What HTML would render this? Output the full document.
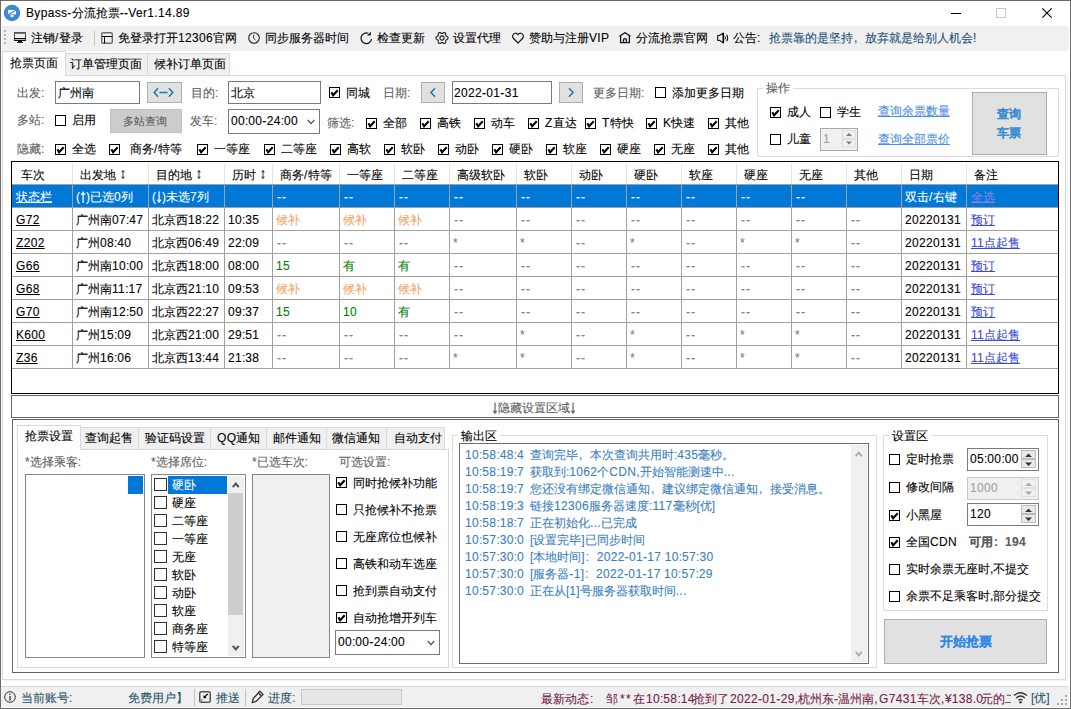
<!DOCTYPE html><html><head><meta charset="utf-8"><style>html,body{margin:0;padding:0;width:1071px;height:709px;overflow:hidden;background:#fff}body{position:relative;font-family:"Liberation Sans",sans-serif;font-size:12px}div{position:absolute;box-sizing:border-box}.t{font:12px/16px "Liberation Sans",sans-serif;white-space:nowrap;-webkit-text-stroke:0.1px currentColor}.l{letter-spacing:.33px}.fc{display:inline-block;width:12px;text-indent:1px}.ar{display:inline-block;transform:scale(1.25,1.55);transform-origin:50% 62%;-webkit-text-stroke:0.3px currentColor}</style></head><body><div style="left:0px;top:0px;width:1071px;height:709px;background:#fff"></div>
<svg style="left:3px;top:4px;position:absolute" width="18" height="18" viewBox="0 0 18 18"><circle cx="9" cy="9" r="8.2" fill="#3b88d8"/><path d="M5 6 H13 V10.4 L5 10.4 Z" fill="#fff"/><path d="M5.2 10.6 L12.8 6.2" stroke="#3b88d8" stroke-width="1.1"/><rect x="7.6" y="11" width="3" height="2" fill="#fff"/></svg>
<div class="t" style="left:26px;top:5px;color:#000;"><span class="l">Bypass-</span>分流抢票<span class="l">--Ver1.14.89</span></div>
<div style="left:951px;top:13px;width:10px;height:1px;background:#000"></div>
<div style="left:996px;top:8px;width:10px;height:10px;border:1px solid #c6c6c6;background:transparent;"></div>
<svg style="position:absolute;left:1042px;top:8px" width="10" height="10"><path d="M0.3 0.3 L9.7 9.7 M9.7 0.3 L0.3 9.7" stroke="#000" stroke-width="1.1"/></svg>
<div style="left:2px;top:26px;width:1067px;height:25px;background:#f0f0f0;border-top-right-radius:4px;border-bottom-right-radius:4px"></div>
<div style="left:4px;top:30px;width:2px;height:2px;background:#b4b4b4"></div>
<div style="left:4px;top:34px;width:2px;height:2px;background:#b4b4b4"></div>
<div style="left:4px;top:38px;width:2px;height:2px;background:#b4b4b4"></div>
<div style="left:4px;top:42px;width:2px;height:2px;background:#b4b4b4"></div>
<div style="left:94px;top:31px;width:1px;height:15px;background:#c4c4c4"></div>
<svg style="left:14px;top:32px;position:absolute" width="12" height="12" viewBox="0 0 12 12" shape-rendering="crispEdges"><rect x="0" y="0" width="12" height="1" fill="#555"/><rect x="0" y="0" width="1" height="9" fill="#444"/><rect x="11" y="0" width="1" height="9" fill="#444"/><rect x="0" y="1" width="12" height="1" fill="#777"/><rect x="0" y="6" width="12" height="1" fill="#111"/><rect x="1" y="7" width="10" height="1" fill="#bcbcc4"/><rect x="0" y="8" width="12" height="1" fill="#111"/><rect x="4" y="9" width="4" height="2" fill="#000"/><rect x="3" y="10" width="6" height="1" fill="#333"/></svg>
<div class="t" style="left:31px;top:30px;color:#000;">注销<span class="l">/</span>登录</div>
<svg style="left:101px;top:32px;position:absolute" width="12" height="12" viewBox="0 0 12 12"><rect x="0.7" y="0.7" width="10.6" height="10.6" rx="1.4" fill="none" stroke="#6c6c6c" stroke-width="1.4"/><rect x="1" y="4" width="10" height="1" fill="#000"/><rect x="3" y="4" width="1" height="7.3" fill="#000"/></svg>
<div class="t" style="left:118px;top:30px;color:#000;">免登录打开<span class="l">12306</span>官网</div>
<svg style="left:248px;top:32px;position:absolute" width="12" height="12" viewBox="0 0 12 12"><circle cx="6" cy="6" r="5.3" fill="none" stroke="#222" stroke-width="1.1"/><path d="M5.6 2.8 V6.3 L7.6 8" fill="none" stroke="#333" stroke-width="1"/></svg>
<div class="t" style="left:265px;top:30px;color:#000;">同步服务器时间</div>
<svg style="left:360px;top:32px;position:absolute" width="13" height="13" viewBox="0 0 13 13"><path d="M8.2 1.3 A5.3 5.3 0 1 0 11.6 7.2" fill="none" stroke="#111" stroke-width="1.2"/><path d="M7 3.4 L10.8 3.4 L10.8 -0.2 Z" fill="#111"/></svg>
<div class="t" style="left:377px;top:30px;color:#000;">检查更新</div>
<svg style="left:435px;top:31px;position:absolute" width="14" height="14" viewBox="0 0 14 14"><path d="M13.10 7.00 L12.97 7.52 L12.61 7.99 L12.12 8.37 L11.60 8.68 L11.18 8.95 L10.90 9.25 L10.77 9.64 L10.75 10.15 L10.75 10.75 L10.66 11.37 L10.44 11.91 L10.05 12.28 L9.53 12.43 L8.95 12.36 L8.37 12.12 L7.85 11.83 L7.40 11.59 L7.00 11.50 L6.60 11.59 L6.15 11.83 L5.63 12.12 L5.05 12.36 L4.47 12.43 L3.95 12.28 L3.56 11.91 L3.34 11.37 L3.25 10.75 L3.25 10.15 L3.23 9.64 L3.10 9.25 L2.82 8.95 L2.40 8.68 L1.88 8.37 L1.39 7.99 L1.03 7.52 L0.90 7.00 L1.03 6.48 L1.39 6.01 L1.88 5.63 L2.40 5.32 L2.82 5.05 L3.10 4.75 L3.23 4.36 L3.25 3.85 L3.25 3.25 L3.34 2.63 L3.56 2.09 L3.95 1.72 L4.47 1.57 L5.05 1.64 L5.63 1.88 L6.15 2.17 L6.60 2.41 L7.00 2.50 L7.40 2.41 L7.85 2.17 L8.37 1.88 L8.95 1.64 L9.53 1.57 L10.05 1.72 L10.44 2.09 L10.66 2.63 L10.75 3.25 L10.75 3.85 L10.77 4.36 L10.90 4.75 L11.18 5.05 L11.60 5.32 L12.12 5.63 L12.61 6.01 L12.97 6.48 Z" fill="none" stroke="#222" stroke-width="1.15"/><circle cx="7" cy="7" r="2.1" fill="none" stroke="#222" stroke-width="1.1"/></svg>
<div class="t" style="left:453px;top:30px;color:#000;">设置代理</div>
<svg style="left:512px;top:32px;position:absolute" width="12" height="12" viewBox="0 0 12 12"><path d="M6 11 L1.5 6.5 C-0.1 4.9 0.6 1.3 3.2 1.2 C4.6 1.15 5.5 2 6 2.7 C6.5 2 7.4 1.15 8.8 1.2 C11.4 1.3 12.1 4.9 10.5 6.5 Z" fill="none" stroke="#111" stroke-width="1.15"/></svg>
<div class="t" style="left:529px;top:30px;color:#000;">赞助与注册<span class="l">VIP</span></div>
<svg style="left:619px;top:32px;position:absolute" width="12" height="12" viewBox="0 0 12 12"><path d="M0.5 4.3 L6 0.7 L11.5 4.3" fill="none" stroke="#111" stroke-width="1.25"/><path d="M1.6 3.6 V10.7 H10.4 V3.6 M4.5 10.7 V7.9 Q4.5 6.7 5.95 6.7 Q7.4 6.7 7.4 7.9 V10.7" fill="none" stroke="#111" stroke-width="1.25"/></svg>
<div class="t" style="left:636px;top:30px;color:#000;">分流抢票官网</div>
<svg style="left:717px;top:32px;position:absolute" width="13" height="12" viewBox="0 0 13 12"><path d="M0.6 3.6 H2.4 L6.3 1 V11 L2.4 8.3 H0.6 Z" fill="none" stroke="#222" stroke-width="1.15" stroke-linejoin="round"/><path d="M6.4 1 V11" stroke="#000" stroke-width="1.4"/><path d="M8.0 4.4 Q8.9 6 8.0 7.6" fill="none" stroke="#222" stroke-width="1.0"/><path d="M9.7 2.8 Q11.6 6 9.7 9.2" fill="none" stroke="#111" stroke-width="1.1"/></svg>
<div class="t" style="left:733px;top:30px;color:#000;">公告:</div>
<div class="t" style="left:769px;top:30px;color:#1d4f78;">抢票靠的是坚持<span class="fc">,</span>放弃就是给别人机会!</div>
<div style="left:2px;top:75px;width:1064px;height:605px;border:1px solid #d9d9d9;background:#fff;"></div>
<div style="left:1067px;top:76px;width:1px;height:605px;background:#eeeeee"></div>
<div style="left:3px;top:680px;width:1065px;height:1px;background:#f2f2f2"></div>
<div style="left:65px;top:53px;width:83px;height:23px;border:1px solid #d9d9d9;background:#f0f0f0;"></div>
<div style="left:147px;top:53px;width:83px;height:23px;border:1px solid #d9d9d9;background:#f0f0f0;"></div>
<div style="left:2px;top:51px;width:64px;height:25px;border:1px solid #d9d9d9;border-bottom:none;background:#fff"></div>
<div class="t" style="left:10px;top:55px;color:#000;">抢票页面</div>
<div class="t" style="left:70px;top:56px;color:#000;">订单管理页面</div>
<div class="t" style="left:154px;top:56px;color:#000;">候补订单页面</div>
<div style="left:0px;top:0px;width:1071px;height:1px;background:#6b6b6b"></div>
<div style="left:0px;top:0px;width:1px;height:709px;background:#6b6b6b"></div>
<div style="left:1070px;top:0px;width:1px;height:709px;background:#6b6b6b"></div>
<div style="left:0px;top:708px;width:1071px;height:1px;background:#6b6b6b"></div>
<div class="t" style="left:17px;top:85px;color:#5c5c5c;">出发:</div>
<div style="left:55px;top:81px;width:85px;height:23px;border:1px solid #7a7a7a;background:#fff;"></div>
<div class="t" style="left:58px;top:85px;color:#000;">广州南</div>
<div style="left:147px;top:82px;width:35px;height:21px;border:1px solid #adadad;background:#e1e1e1;"></div>
<svg style="position:absolute;left:153px;top:87px" width="21" height="11" viewBox="0 0 21 11"><path d="M5 1.2 L1.3 5.5 L5 9.8 M16 1.2 L19.7 5.5 L16 9.8 M6.5 5.5 H14.5" fill="none" stroke="#147aa6" stroke-width="1.5"/></svg>
<div class="t" style="left:191px;top:85px;color:#5c5c5c;">目的:</div>
<div style="left:228px;top:81px;width:93px;height:23px;border:1px solid #7a7a7a;background:#fff;"></div>
<div class="t" style="left:231px;top:85px;color:#000;">北京</div>
<div style="left:329px;top:87px;width:11px;height:11px;border:1px solid #000;background:#fff"><svg width="9" height="9" style="position:absolute;left:0;top:0"><polyline points="1.4,4.3 3.1,7.3 7.7,2.3" fill="none" stroke="#000" stroke-width="2.1"/></svg></div>
<div class="t" style="left:346px;top:85px;color:#000;">同城</div>
<div class="t" style="left:383px;top:85px;color:#5c5c5c;">日期:</div>
<div style="left:421px;top:82px;width:24px;height:21px;border:1px solid #adadad;background:#e1e1e1;"></div>
<svg style="position:absolute;left:429px;top:87px" width="8" height="11"><path d="M6 1.2 L2 5.5 L6 9.8" fill="none" stroke="#147aa6" stroke-width="1.5"/></svg>
<div style="left:452px;top:81px;width:100px;height:23px;border:1px solid #7a7a7a;background:#fff;"></div>
<div class="t" style="left:454px;top:85px;color:#000;"><span class="l">2022-01-31</span></div>
<div style="left:559px;top:82px;width:24px;height:21px;border:1px solid #adadad;background:#e1e1e1;"></div>
<svg style="position:absolute;left:567px;top:87px" width="8" height="11"><path d="M2 1.2 L6 5.5 L2 9.8" fill="none" stroke="#147aa6" stroke-width="1.5"/></svg>
<div class="t" style="left:593px;top:85px;color:#5c5c5c;">更多日期:</div>
<div style="left:655px;top:87px;width:11px;height:11px;border:1px solid #000;background:#fff"></div>
<div class="t" style="left:672px;top:85px;color:#000;">添加更多日期</div>
<div class="t" style="left:17px;top:112px;color:#5c5c5c;">多站:</div>
<div style="left:55px;top:115px;width:11px;height:11px;border:1px solid #000;background:#fff"></div>
<div class="t" style="left:72px;top:112px;color:#000;">启用</div>
<div style="left:110px;top:109px;width:72px;height:24px;border:1px solid #c2c2c2;background:#cccccc;"></div>
<div class="t" style="left:123px;top:113px;color:#5c5c5c;font-size:11px">多站查询</div>
<div class="t" style="left:190px;top:113px;color:#5c5c5c;">发车:</div>
<div style="left:228px;top:109px;width:92px;height:25px;border:1px solid #7a7a7a;background:#fff;"></div>
<div class="t" style="left:231px;top:113px;color:#000;"><span class="l">00</span>:<span class="l">00-24</span>:<span class="l">00</span></div>
<svg style="position:absolute;left:307px;top:119px" width="9" height="6"><path d="M0.6 0.8 L4 4.6 L7.4 0.8" fill="none" stroke="#444" stroke-width="1.15"/></svg>
<div class="t" style="left:327px;top:115px;color:#5c5c5c;">筛选:</div>
<div style="left:366px;top:118px;width:11px;height:11px;border:1px solid #000;background:#fff"><svg width="9" height="9" style="position:absolute;left:0;top:0"><polyline points="1.4,4.3 3.1,7.3 7.7,2.3" fill="none" stroke="#000" stroke-width="2.1"/></svg></div>
<div class="t" style="left:383px;top:115px;color:#000;">全部</div>
<div style="left:420px;top:118px;width:11px;height:11px;border:1px solid #000;background:#fff"><svg width="9" height="9" style="position:absolute;left:0;top:0"><polyline points="1.4,4.3 3.1,7.3 7.7,2.3" fill="none" stroke="#000" stroke-width="2.1"/></svg></div>
<div class="t" style="left:437px;top:115px;color:#000;">高铁</div>
<div style="left:474px;top:118px;width:11px;height:11px;border:1px solid #000;background:#fff"><svg width="9" height="9" style="position:absolute;left:0;top:0"><polyline points="1.4,4.3 3.1,7.3 7.7,2.3" fill="none" stroke="#000" stroke-width="2.1"/></svg></div>
<div class="t" style="left:491px;top:115px;color:#000;">动车</div>
<div style="left:528px;top:118px;width:11px;height:11px;border:1px solid #000;background:#fff"><svg width="9" height="9" style="position:absolute;left:0;top:0"><polyline points="1.4,4.3 3.1,7.3 7.7,2.3" fill="none" stroke="#000" stroke-width="2.1"/></svg></div>
<div class="t" style="left:545px;top:115px;color:#000;"><span class="l">Z</span>直达</div>
<div style="left:585px;top:118px;width:11px;height:11px;border:1px solid #000;background:#fff"><svg width="9" height="9" style="position:absolute;left:0;top:0"><polyline points="1.4,4.3 3.1,7.3 7.7,2.3" fill="none" stroke="#000" stroke-width="2.1"/></svg></div>
<div class="t" style="left:602px;top:115px;color:#000;"><span class="l">T</span>特快</div>
<div style="left:646px;top:118px;width:11px;height:11px;border:1px solid #000;background:#fff"><svg width="9" height="9" style="position:absolute;left:0;top:0"><polyline points="1.4,4.3 3.1,7.3 7.7,2.3" fill="none" stroke="#000" stroke-width="2.1"/></svg></div>
<div class="t" style="left:663px;top:115px;color:#000;"><span class="l">K</span>快速</div>
<div style="left:708px;top:118px;width:11px;height:11px;border:1px solid #000;background:#fff"><svg width="9" height="9" style="position:absolute;left:0;top:0"><polyline points="1.4,4.3 3.1,7.3 7.7,2.3" fill="none" stroke="#000" stroke-width="2.1"/></svg></div>
<div class="t" style="left:725px;top:115px;color:#000;">其他</div>
<div class="t" style="left:17px;top:141px;color:#5c5c5c;">隐藏:</div>
<div style="left:55px;top:144px;width:11px;height:11px;border:1px solid #000;background:#fff"><svg width="9" height="9" style="position:absolute;left:0;top:0"><polyline points="1.4,4.3 3.1,7.3 7.7,2.3" fill="none" stroke="#000" stroke-width="2.1"/></svg></div>
<div class="t" style="left:72px;top:141px;color:#000;">全选</div>
<div style="left:109px;top:144px;width:11px;height:11px;border:1px solid #000;background:#fff"><svg width="9" height="9" style="position:absolute;left:0;top:0"><polyline points="1.4,4.3 3.1,7.3 7.7,2.3" fill="none" stroke="#000" stroke-width="2.1"/></svg></div>
<div class="t" style="left:130px;top:141px;color:#000;">商务<span class="l">/</span>特等</div>
<div style="left:197px;top:144px;width:11px;height:11px;border:1px solid #000;background:#fff"><svg width="9" height="9" style="position:absolute;left:0;top:0"><polyline points="1.4,4.3 3.1,7.3 7.7,2.3" fill="none" stroke="#000" stroke-width="2.1"/></svg></div>
<div class="t" style="left:214px;top:141px;color:#000;">一等座</div>
<div style="left:264px;top:144px;width:11px;height:11px;border:1px solid #000;background:#fff"><svg width="9" height="9" style="position:absolute;left:0;top:0"><polyline points="1.4,4.3 3.1,7.3 7.7,2.3" fill="none" stroke="#000" stroke-width="2.1"/></svg></div>
<div class="t" style="left:281px;top:141px;color:#000;">二等座</div>
<div style="left:330px;top:144px;width:11px;height:11px;border:1px solid #000;background:#fff"><svg width="9" height="9" style="position:absolute;left:0;top:0"><polyline points="1.4,4.3 3.1,7.3 7.7,2.3" fill="none" stroke="#000" stroke-width="2.1"/></svg></div>
<div class="t" style="left:347px;top:141px;color:#000;">高软</div>
<div style="left:384px;top:144px;width:11px;height:11px;border:1px solid #000;background:#fff"><svg width="9" height="9" style="position:absolute;left:0;top:0"><polyline points="1.4,4.3 3.1,7.3 7.7,2.3" fill="none" stroke="#000" stroke-width="2.1"/></svg></div>
<div class="t" style="left:401px;top:141px;color:#000;">软卧</div>
<div style="left:438px;top:144px;width:11px;height:11px;border:1px solid #000;background:#fff"><svg width="9" height="9" style="position:absolute;left:0;top:0"><polyline points="1.4,4.3 3.1,7.3 7.7,2.3" fill="none" stroke="#000" stroke-width="2.1"/></svg></div>
<div class="t" style="left:455px;top:141px;color:#000;">动卧</div>
<div style="left:492px;top:144px;width:11px;height:11px;border:1px solid #000;background:#fff"><svg width="9" height="9" style="position:absolute;left:0;top:0"><polyline points="1.4,4.3 3.1,7.3 7.7,2.3" fill="none" stroke="#000" stroke-width="2.1"/></svg></div>
<div class="t" style="left:509px;top:141px;color:#000;">硬卧</div>
<div style="left:546px;top:144px;width:11px;height:11px;border:1px solid #000;background:#fff"><svg width="9" height="9" style="position:absolute;left:0;top:0"><polyline points="1.4,4.3 3.1,7.3 7.7,2.3" fill="none" stroke="#000" stroke-width="2.1"/></svg></div>
<div class="t" style="left:563px;top:141px;color:#000;">软座</div>
<div style="left:600px;top:144px;width:11px;height:11px;border:1px solid #000;background:#fff"><svg width="9" height="9" style="position:absolute;left:0;top:0"><polyline points="1.4,4.3 3.1,7.3 7.7,2.3" fill="none" stroke="#000" stroke-width="2.1"/></svg></div>
<div class="t" style="left:617px;top:141px;color:#000;">硬座</div>
<div style="left:654px;top:144px;width:11px;height:11px;border:1px solid #000;background:#fff"><svg width="9" height="9" style="position:absolute;left:0;top:0"><polyline points="1.4,4.3 3.1,7.3 7.7,2.3" fill="none" stroke="#000" stroke-width="2.1"/></svg></div>
<div class="t" style="left:671px;top:141px;color:#000;">无座</div>
<div style="left:708px;top:144px;width:11px;height:11px;border:1px solid #000;background:#fff"><svg width="9" height="9" style="position:absolute;left:0;top:0"><polyline points="1.4,4.3 3.1,7.3 7.7,2.3" fill="none" stroke="#000" stroke-width="2.1"/></svg></div>
<div class="t" style="left:725px;top:141px;color:#000;">其他</div>
<div style="left:757px;top:88px;width:302px;height:69px;border:1px solid #dcdcdc;background:transparent;"></div>
<div style="left:763px;top:80px;width:30px;height:16px;background:#fff"></div>
<div class="t" style="left:766px;top:80px;color:#5c5c5c;">操作</div>
<div style="left:770px;top:107px;width:11px;height:11px;border:1px solid #000;background:#fff"><svg width="9" height="9" style="position:absolute;left:0;top:0"><polyline points="1.4,4.3 3.1,7.3 7.7,2.3" fill="none" stroke="#000" stroke-width="2.1"/></svg></div>
<div class="t" style="left:787px;top:104px;color:#000;">成人</div>
<div style="left:820px;top:107px;width:11px;height:11px;border:1px solid #000;background:#fff"></div>
<div class="t" style="left:837px;top:104px;color:#000;">学生</div>
<div class="t" style="left:878px;top:103px;color:#4a8ee6;text-decoration:underline">查询余票数量</div>
<div style="left:770px;top:134px;width:11px;height:11px;border:1px solid #000;background:#fff"></div>
<div class="t" style="left:787px;top:131px;color:#000;">儿童</div>
<div style="left:820px;top:128px;width:38px;height:23px;border:1px solid #a6a9b0;background:#f0f0f0;"></div>
<div class="t" style="left:823px;top:131px;color:#a0a0a0;"><span class="l">1</span></div>
<svg style="position:absolute;left:842px;top:130px" width="14" height="18"><rect x="0.5" y="0.5" width="13" height="7.5" fill="#f0f0f0" stroke="#dcdcdc"/><rect x="0.5" y="9.5" width="13" height="7.5" fill="#f0f0f0" stroke="#dcdcdc"/><path d="M4 6 L7 3 L10 6 Z M4 11.5 L7 14.5 L10 11.5 Z" fill="#7a7a7a"/></svg>
<div class="t" style="left:878px;top:131px;color:#4a8ee6;text-decoration:underline">查询全部票价</div>
<div style="left:972px;top:92px;width:75px;height:63px;border:1px solid #adadad;background:#e1e1e1;"></div>
<div class="t" style="left:997px;top:106px;color:#3a8dd0;font-weight:bold">查询</div>
<div class="t" style="left:997px;top:125px;color:#3a8dd0;font-weight:bold">车票</div>
<div style="left:11px;top:161px;width:1048px;height:233px;border:1px solid #000;background:#fff;"></div>
<div class="t" style="left:21px;top:167px;color:#000;">车次</div>
<div class="t" style="left:80px;top:167px;color:#000;">出发地</div>
<svg style="position:absolute;left:120px;top:169px" width="6" height="11"><path d="M3 1.5 V9.5" stroke="#444" stroke-width="1"/><path d="M1 3.3 L3 1 L5 3.3 Z M1 7.7 L3 10 L5 7.7 Z" fill="#444"/></svg>
<div class="t" style="left:156px;top:167px;color:#000;">目的地</div>
<svg style="position:absolute;left:196px;top:169px" width="6" height="11"><path d="M3 1.5 V9.5" stroke="#444" stroke-width="1"/><path d="M1 3.3 L3 1 L5 3.3 Z M1 7.7 L3 10 L5 7.7 Z" fill="#444"/></svg>
<div class="t" style="left:232px;top:167px;color:#000;">历时</div>
<svg style="position:absolute;left:260px;top:169px" width="6" height="11"><path d="M3 1.5 V9.5" stroke="#444" stroke-width="1"/><path d="M1 3.3 L3 1 L5 3.3 Z M1 7.7 L3 10 L5 7.7 Z" fill="#444"/></svg>
<div class="t" style="left:280px;top:167px;color:#000;">商务<span class="l">/</span>特等</div>
<div class="t" style="left:347px;top:167px;color:#000;">一等座</div>
<div class="t" style="left:402px;top:167px;color:#000;">二等座</div>
<div class="t" style="left:457px;top:167px;color:#000;">高级软卧</div>
<div class="t" style="left:524px;top:167px;color:#000;">软卧</div>
<div class="t" style="left:579px;top:167px;color:#000;">动卧</div>
<div class="t" style="left:634px;top:167px;color:#000;">硬卧</div>
<div class="t" style="left:689px;top:167px;color:#000;">软座</div>
<div class="t" style="left:744px;top:167px;color:#000;">硬座</div>
<div class="t" style="left:799px;top:167px;color:#000;">无座</div>
<div class="t" style="left:854px;top:167px;color:#000;">其他</div>
<div class="t" style="left:909px;top:167px;color:#000;">日期</div>
<div class="t" style="left:974px;top:167px;color:#000;">备注</div>
<div style="left:72px;top:164px;width:1px;height:20px;background:#e4e4e4"></div>
<div style="left:148px;top:164px;width:1px;height:20px;background:#e4e4e4"></div>
<div style="left:224px;top:164px;width:1px;height:20px;background:#e4e4e4"></div>
<div style="left:272px;top:164px;width:1px;height:20px;background:#e4e4e4"></div>
<div style="left:339px;top:164px;width:1px;height:20px;background:#e4e4e4"></div>
<div style="left:394px;top:164px;width:1px;height:20px;background:#e4e4e4"></div>
<div style="left:449px;top:164px;width:1px;height:20px;background:#e4e4e4"></div>
<div style="left:516px;top:164px;width:1px;height:20px;background:#e4e4e4"></div>
<div style="left:571px;top:164px;width:1px;height:20px;background:#e4e4e4"></div>
<div style="left:626px;top:164px;width:1px;height:20px;background:#e4e4e4"></div>
<div style="left:681px;top:164px;width:1px;height:20px;background:#e4e4e4"></div>
<div style="left:736px;top:164px;width:1px;height:20px;background:#e4e4e4"></div>
<div style="left:791px;top:164px;width:1px;height:20px;background:#e4e4e4"></div>
<div style="left:846px;top:164px;width:1px;height:20px;background:#e4e4e4"></div>
<div style="left:901px;top:164px;width:1px;height:20px;background:#e4e4e4"></div>
<div style="left:966px;top:164px;width:1px;height:20px;background:#e4e4e4"></div>
<div style="left:12px;top:185px;width:1046px;height:22px;background:#0078d7"></div>
<div style="left:12px;top:184px;width:1046px;height:1px;background:#a0a0a0"></div>
<div style="left:12px;top:207px;width:1046px;height:1px;background:#a0a0a0"></div>
<div style="left:12px;top:230px;width:1046px;height:1px;background:#a0a0a0"></div>
<div style="left:12px;top:253px;width:1046px;height:1px;background:#a0a0a0"></div>
<div style="left:12px;top:276px;width:1046px;height:1px;background:#a0a0a0"></div>
<div style="left:12px;top:299px;width:1046px;height:1px;background:#a0a0a0"></div>
<div style="left:12px;top:322px;width:1046px;height:1px;background:#a0a0a0"></div>
<div style="left:12px;top:345px;width:1046px;height:1px;background:#a0a0a0"></div>
<div style="left:12px;top:368px;width:1046px;height:1px;background:#a0a0a0"></div>
<div style="left:72px;top:184px;width:1px;height:185px;background:#a0a0a0"></div>
<div style="left:148px;top:184px;width:1px;height:185px;background:#a0a0a0"></div>
<div style="left:224px;top:184px;width:1px;height:185px;background:#a0a0a0"></div>
<div style="left:272px;top:184px;width:1px;height:185px;background:#a0a0a0"></div>
<div style="left:339px;top:184px;width:1px;height:185px;background:#a0a0a0"></div>
<div style="left:394px;top:184px;width:1px;height:185px;background:#a0a0a0"></div>
<div style="left:449px;top:184px;width:1px;height:185px;background:#a0a0a0"></div>
<div style="left:516px;top:184px;width:1px;height:185px;background:#a0a0a0"></div>
<div style="left:571px;top:184px;width:1px;height:185px;background:#a0a0a0"></div>
<div style="left:626px;top:184px;width:1px;height:185px;background:#a0a0a0"></div>
<div style="left:681px;top:184px;width:1px;height:185px;background:#a0a0a0"></div>
<div style="left:736px;top:184px;width:1px;height:185px;background:#a0a0a0"></div>
<div style="left:791px;top:184px;width:1px;height:185px;background:#a0a0a0"></div>
<div style="left:846px;top:184px;width:1px;height:185px;background:#a0a0a0"></div>
<div style="left:901px;top:184px;width:1px;height:185px;background:#a0a0a0"></div>
<div style="left:966px;top:184px;width:1px;height:185px;background:#a0a0a0"></div>
<div class="t" style="left:16px;top:189px;color:#fff;text-decoration:underline">状态栏</div>
<div class="t" style="left:76px;top:189px;color:#fff;">(<span class="ar">↑</span>)已选0列</div>
<div class="t" style="left:152px;top:189px;color:#fff;">(<span class="ar">↓</span>)未选7列</div>
<div class="t" style="left:277px;top:189px;color:#fff;letter-spacing:1px">--</div>
<div class="t" style="left:344px;top:189px;color:#fff;letter-spacing:1px">--</div>
<div class="t" style="left:399px;top:189px;color:#fff;letter-spacing:1px">--</div>
<div class="t" style="left:454px;top:189px;color:#fff;letter-spacing:1px">--</div>
<div class="t" style="left:521px;top:189px;color:#fff;letter-spacing:1px">--</div>
<div class="t" style="left:576px;top:189px;color:#fff;letter-spacing:1px">--</div>
<div class="t" style="left:631px;top:189px;color:#fff;letter-spacing:1px">--</div>
<div class="t" style="left:686px;top:189px;color:#fff;letter-spacing:1px">--</div>
<div class="t" style="left:741px;top:189px;color:#fff;letter-spacing:1px">--</div>
<div class="t" style="left:796px;top:189px;color:#fff;letter-spacing:1px">--</div>
<div class="t" style="left:905px;top:189px;color:#fff;">双击<span class="l">/</span>右键</div>
<div class="t" style="left:971px;top:189px;color:#8a7de0;text-decoration:underline">全选</div>
<div class="t" style="left:16px;top:212px;color:#000;text-decoration:underline"><span class="l">G72</span></div>
<div class="t" style="left:76px;top:212px;color:#000;">广州南<span class="l">07</span>:<span class="l">47</span></div>
<div class="t" style="left:152px;top:212px;color:#000;">北京西<span class="l">18</span>:<span class="l">22</span></div>
<div class="t" style="left:228px;top:212px;color:#000;"><span class="l">10</span>:<span class="l">35</span></div>
<div class="t" style="left:276px;top:212px;color:#f4a460;">候补</div>
<div class="t" style="left:343px;top:212px;color:#f4a460;">候补</div>
<div class="t" style="left:398px;top:212px;color:#f4a460;">候补</div>
<div class="t" style="left:454px;top:212px;color:#808080;letter-spacing:1px">--</div>
<div class="t" style="left:521px;top:212px;color:#808080;letter-spacing:1px">--</div>
<div class="t" style="left:576px;top:212px;color:#808080;letter-spacing:1px">--</div>
<div class="t" style="left:631px;top:212px;color:#808080;letter-spacing:1px">--</div>
<div class="t" style="left:686px;top:212px;color:#808080;letter-spacing:1px">--</div>
<div class="t" style="left:741px;top:212px;color:#808080;letter-spacing:1px">--</div>
<div class="t" style="left:796px;top:212px;color:#808080;letter-spacing:1px">--</div>
<div class="t" style="left:851px;top:212px;color:#808080;letter-spacing:1px">--</div>
<div class="t" style="left:905px;top:212px;color:#000;"><span class="l">20220131</span></div>
<div class="t" style="left:971px;top:212px;color:#3b49d8;text-decoration:underline">预订</div>
<div class="t" style="left:16px;top:235px;color:#000;text-decoration:underline"><span class="l">Z202</span></div>
<div class="t" style="left:76px;top:235px;color:#000;">广州<span class="l">08</span>:<span class="l">40</span></div>
<div class="t" style="left:152px;top:235px;color:#000;">北京西<span class="l">06</span>:<span class="l">49</span></div>
<div class="t" style="left:228px;top:235px;color:#000;"><span class="l">22</span>:<span class="l">09</span></div>
<div class="t" style="left:277px;top:235px;color:#808080;letter-spacing:1px">--</div>
<div class="t" style="left:344px;top:235px;color:#808080;letter-spacing:1px">--</div>
<div class="t" style="left:399px;top:235px;color:#808080;letter-spacing:1px">--</div>
<div class="t" style="left:453px;top:235px;color:#808080;">*</div>
<div class="t" style="left:520px;top:235px;color:#808080;">*</div>
<div class="t" style="left:576px;top:235px;color:#808080;letter-spacing:1px">--</div>
<div class="t" style="left:630px;top:235px;color:#808080;">*</div>
<div class="t" style="left:686px;top:235px;color:#808080;letter-spacing:1px">--</div>
<div class="t" style="left:740px;top:235px;color:#808080;">*</div>
<div class="t" style="left:795px;top:235px;color:#808080;">*</div>
<div class="t" style="left:851px;top:235px;color:#808080;letter-spacing:1px">--</div>
<div class="t" style="left:905px;top:235px;color:#000;"><span class="l">20220131</span></div>
<div class="t" style="left:971px;top:235px;color:#3b49d8;text-decoration:underline"><span class="l">11</span>点起售</div>
<div class="t" style="left:16px;top:258px;color:#000;text-decoration:underline"><span class="l">G66</span></div>
<div class="t" style="left:76px;top:258px;color:#000;">广州南<span class="l">10</span>:<span class="l">00</span></div>
<div class="t" style="left:152px;top:258px;color:#000;">北京西<span class="l">18</span>:<span class="l">00</span></div>
<div class="t" style="left:228px;top:258px;color:#000;"><span class="l">08</span>:<span class="l">00</span></div>
<div class="t" style="left:276px;top:258px;color:#008000;"><span class="l">15</span></div>
<div class="t" style="left:343px;top:258px;color:#008000;">有</div>
<div class="t" style="left:398px;top:258px;color:#008000;">有</div>
<div class="t" style="left:454px;top:258px;color:#808080;letter-spacing:1px">--</div>
<div class="t" style="left:521px;top:258px;color:#808080;letter-spacing:1px">--</div>
<div class="t" style="left:576px;top:258px;color:#808080;letter-spacing:1px">--</div>
<div class="t" style="left:631px;top:258px;color:#808080;letter-spacing:1px">--</div>
<div class="t" style="left:686px;top:258px;color:#808080;letter-spacing:1px">--</div>
<div class="t" style="left:741px;top:258px;color:#808080;letter-spacing:1px">--</div>
<div class="t" style="left:796px;top:258px;color:#808080;letter-spacing:1px">--</div>
<div class="t" style="left:851px;top:258px;color:#808080;letter-spacing:1px">--</div>
<div class="t" style="left:905px;top:258px;color:#000;"><span class="l">20220131</span></div>
<div class="t" style="left:971px;top:258px;color:#3b49d8;text-decoration:underline">预订</div>
<div class="t" style="left:16px;top:281px;color:#000;text-decoration:underline"><span class="l">G68</span></div>
<div class="t" style="left:76px;top:281px;color:#000;">广州南<span class="l">11</span>:<span class="l">17</span></div>
<div class="t" style="left:152px;top:281px;color:#000;">北京西<span class="l">21</span>:<span class="l">10</span></div>
<div class="t" style="left:228px;top:281px;color:#000;"><span class="l">09</span>:<span class="l">53</span></div>
<div class="t" style="left:276px;top:281px;color:#f4a460;">候补</div>
<div class="t" style="left:343px;top:281px;color:#f4a460;">候补</div>
<div class="t" style="left:398px;top:281px;color:#f4a460;">候补</div>
<div class="t" style="left:454px;top:281px;color:#808080;letter-spacing:1px">--</div>
<div class="t" style="left:521px;top:281px;color:#808080;letter-spacing:1px">--</div>
<div class="t" style="left:576px;top:281px;color:#808080;letter-spacing:1px">--</div>
<div class="t" style="left:631px;top:281px;color:#808080;letter-spacing:1px">--</div>
<div class="t" style="left:686px;top:281px;color:#808080;letter-spacing:1px">--</div>
<div class="t" style="left:741px;top:281px;color:#808080;letter-spacing:1px">--</div>
<div class="t" style="left:796px;top:281px;color:#808080;letter-spacing:1px">--</div>
<div class="t" style="left:851px;top:281px;color:#808080;letter-spacing:1px">--</div>
<div class="t" style="left:905px;top:281px;color:#000;"><span class="l">20220131</span></div>
<div class="t" style="left:971px;top:281px;color:#3b49d8;text-decoration:underline">预订</div>
<div class="t" style="left:16px;top:304px;color:#000;text-decoration:underline"><span class="l">G70</span></div>
<div class="t" style="left:76px;top:304px;color:#000;">广州南<span class="l">12</span>:<span class="l">50</span></div>
<div class="t" style="left:152px;top:304px;color:#000;">北京西<span class="l">22</span>:<span class="l">27</span></div>
<div class="t" style="left:228px;top:304px;color:#000;"><span class="l">09</span>:<span class="l">37</span></div>
<div class="t" style="left:276px;top:304px;color:#008000;"><span class="l">15</span></div>
<div class="t" style="left:343px;top:304px;color:#008000;"><span class="l">10</span></div>
<div class="t" style="left:398px;top:304px;color:#008000;">有</div>
<div class="t" style="left:454px;top:304px;color:#808080;letter-spacing:1px">--</div>
<div class="t" style="left:521px;top:304px;color:#808080;letter-spacing:1px">--</div>
<div class="t" style="left:576px;top:304px;color:#808080;letter-spacing:1px">--</div>
<div class="t" style="left:631px;top:304px;color:#808080;letter-spacing:1px">--</div>
<div class="t" style="left:686px;top:304px;color:#808080;letter-spacing:1px">--</div>
<div class="t" style="left:741px;top:304px;color:#808080;letter-spacing:1px">--</div>
<div class="t" style="left:796px;top:304px;color:#808080;letter-spacing:1px">--</div>
<div class="t" style="left:851px;top:304px;color:#808080;letter-spacing:1px">--</div>
<div class="t" style="left:905px;top:304px;color:#000;"><span class="l">20220131</span></div>
<div class="t" style="left:971px;top:304px;color:#3b49d8;text-decoration:underline">预订</div>
<div class="t" style="left:16px;top:327px;color:#000;text-decoration:underline"><span class="l">K600</span></div>
<div class="t" style="left:76px;top:327px;color:#000;">广州<span class="l">15</span>:<span class="l">09</span></div>
<div class="t" style="left:152px;top:327px;color:#000;">北京西<span class="l">21</span>:<span class="l">00</span></div>
<div class="t" style="left:228px;top:327px;color:#000;"><span class="l">29</span>:<span class="l">51</span></div>
<div class="t" style="left:277px;top:327px;color:#808080;letter-spacing:1px">--</div>
<div class="t" style="left:344px;top:327px;color:#808080;letter-spacing:1px">--</div>
<div class="t" style="left:399px;top:327px;color:#808080;letter-spacing:1px">--</div>
<div class="t" style="left:454px;top:327px;color:#808080;letter-spacing:1px">--</div>
<div class="t" style="left:520px;top:327px;color:#808080;">*</div>
<div class="t" style="left:576px;top:327px;color:#808080;letter-spacing:1px">--</div>
<div class="t" style="left:630px;top:327px;color:#808080;">*</div>
<div class="t" style="left:686px;top:327px;color:#808080;letter-spacing:1px">--</div>
<div class="t" style="left:740px;top:327px;color:#808080;">*</div>
<div class="t" style="left:795px;top:327px;color:#808080;">*</div>
<div class="t" style="left:851px;top:327px;color:#808080;letter-spacing:1px">--</div>
<div class="t" style="left:905px;top:327px;color:#000;"><span class="l">20220131</span></div>
<div class="t" style="left:971px;top:327px;color:#3b49d8;text-decoration:underline"><span class="l">11</span>点起售</div>
<div class="t" style="left:16px;top:350px;color:#000;text-decoration:underline"><span class="l">Z36</span></div>
<div class="t" style="left:76px;top:350px;color:#000;">广州<span class="l">16</span>:<span class="l">06</span></div>
<div class="t" style="left:152px;top:350px;color:#000;">北京西<span class="l">13</span>:<span class="l">44</span></div>
<div class="t" style="left:228px;top:350px;color:#000;"><span class="l">21</span>:<span class="l">38</span></div>
<div class="t" style="left:277px;top:350px;color:#808080;letter-spacing:1px">--</div>
<div class="t" style="left:344px;top:350px;color:#808080;letter-spacing:1px">--</div>
<div class="t" style="left:399px;top:350px;color:#808080;letter-spacing:1px">--</div>
<div class="t" style="left:453px;top:350px;color:#808080;">*</div>
<div class="t" style="left:520px;top:350px;color:#808080;">*</div>
<div class="t" style="left:576px;top:350px;color:#808080;letter-spacing:1px">--</div>
<div class="t" style="left:630px;top:350px;color:#808080;">*</div>
<div class="t" style="left:686px;top:350px;color:#808080;letter-spacing:1px">--</div>
<div class="t" style="left:740px;top:350px;color:#808080;">*</div>
<div class="t" style="left:795px;top:350px;color:#808080;">*</div>
<div class="t" style="left:851px;top:350px;color:#808080;letter-spacing:1px">--</div>
<div class="t" style="left:905px;top:350px;color:#000;"><span class="l">20220131</span></div>
<div class="t" style="left:971px;top:350px;color:#3b49d8;text-decoration:underline"><span class="l">11</span>点起售</div>
<div style="left:11px;top:395px;width:1048px;height:23px;border:1px solid #646464;background:#fff;"></div>
<div class="t" style="left:492px;top:400px;color:#5c5c5c;"><span class="ar">↓</span>隐藏设置区域<span class="ar">↓</span></div>
<div style="left:12px;top:419px;width:1047px;height:254px;border:1px solid #646464;background:#fff;"></div>
<div style="left:17px;top:449px;width:432px;height:219px;border:1px solid #d9d9d9;background:#fff;"></div>
<div style="left:80px;top:427px;width:59px;height:23px;border:1px solid #d9d9d9;background:#f0f0f0;"></div>
<div style="left:138px;top:427px;width:73px;height:23px;border:1px solid #d9d9d9;background:#f0f0f0;"></div>
<div style="left:210px;top:427px;width:57px;height:23px;border:1px solid #d9d9d9;background:#f0f0f0;"></div>
<div style="left:266px;top:427px;width:61px;height:23px;border:1px solid #d9d9d9;background:#f0f0f0;"></div>
<div style="left:326px;top:427px;width:61px;height:23px;border:1px solid #d9d9d9;background:#f0f0f0;"></div>
<div style="left:386px;top:427px;width:59px;height:23px;border:1px solid #d9d9d9;background:#f0f0f0;"></div>
<div style="left:17px;top:425px;width:64px;height:25px;border:1px solid #d9d9d9;border-bottom:none;background:#fff"></div>
<div class="t" style="left:25px;top:428px;color:#000;">抢票设置</div>
<div class="t" style="left:85px;top:430px;color:#000;">查询起售</div>
<div class="t" style="left:145px;top:430px;color:#000;">验证码设置</div>
<div class="t" style="left:217px;top:430px;color:#000;"><span class="l">QQ</span>通知</div>
<div class="t" style="left:273px;top:430px;color:#000;">邮件通知</div>
<div class="t" style="left:332px;top:430px;color:#000;">微信通知</div>
<div class="t" style="left:394px;top:430px;color:#000;">自动支付</div>
<div class="t" style="left:25px;top:454px;color:#5c5c5c;">*选择乘客:</div>
<div class="t" style="left:151px;top:454px;color:#5c5c5c;">*选择席位:</div>
<div class="t" style="left:252px;top:454px;color:#5c5c5c;">*已选车次:</div>
<div class="t" style="left:339px;top:454px;color:#5c5c5c;">可选设置:</div>
<div style="left:25px;top:474px;width:120px;height:184px;border:1px solid #828790;background:#fff;"></div>
<div style="left:128px;top:476px;width:15px;height:18px;background:#0078d7"></div>
<div style="left:151px;top:474px;width:95px;height:184px;border:1px solid #828790;background:#fff;"></div>
<div style="left:154px;top:478px;width:13px;height:13px;border:1px solid #333;background:#fff"></div>
<div style="left:168px;top:476px;width:59px;height:18px;background:#0078d7"></div>
<div class="t" style="left:172px;top:477px;color:#fff;">硬卧</div>
<div style="left:154px;top:496px;width:13px;height:13px;border:1px solid #333;background:#fff"></div>
<div class="t" style="left:172px;top:495px;color:#000;">硬座</div>
<div style="left:154px;top:514px;width:13px;height:13px;border:1px solid #333;background:#fff"></div>
<div class="t" style="left:172px;top:513px;color:#000;">二等座</div>
<div style="left:154px;top:532px;width:13px;height:13px;border:1px solid #333;background:#fff"></div>
<div class="t" style="left:172px;top:531px;color:#000;">一等座</div>
<div style="left:154px;top:550px;width:13px;height:13px;border:1px solid #333;background:#fff"></div>
<div class="t" style="left:172px;top:549px;color:#000;">无座</div>
<div style="left:154px;top:568px;width:13px;height:13px;border:1px solid #333;background:#fff"></div>
<div class="t" style="left:172px;top:567px;color:#000;">软卧</div>
<div style="left:154px;top:586px;width:13px;height:13px;border:1px solid #333;background:#fff"></div>
<div class="t" style="left:172px;top:585px;color:#000;">动卧</div>
<div style="left:154px;top:604px;width:13px;height:13px;border:1px solid #333;background:#fff"></div>
<div class="t" style="left:172px;top:603px;color:#000;">软座</div>
<div style="left:154px;top:622px;width:13px;height:13px;border:1px solid #333;background:#fff"></div>
<div class="t" style="left:172px;top:621px;color:#000;">商务座</div>
<div style="left:154px;top:640px;width:13px;height:13px;border:1px solid #333;background:#fff"></div>
<div class="t" style="left:172px;top:639px;color:#000;">特等座</div>
<div style="left:228px;top:476px;width:16px;height:180px;background:#f0f0f0"></div>
<div style="left:228px;top:493px;width:15px;height:122px;background:#cdcdcd"></div>
<svg style="position:absolute;left:232px;top:481px" width="8" height="8"><path d="M0.8 6.2 L3.75 2.6 L6.7 6.2" fill="none" stroke="#505050" stroke-width="2"/></svg>
<svg style="position:absolute;left:232px;top:644px" width="8" height="8"><path d="M0.8 1.8 L3.75 5.4 L6.7 1.8" fill="none" stroke="#505050" stroke-width="2"/></svg>
<div style="left:252px;top:474px;width:78px;height:184px;border:1px solid #828790;background:#f0f0f0;"></div>
<div style="left:336px;top:477px;width:11px;height:11px;border:1px solid #000;background:#fff"><svg width="9" height="9" style="position:absolute;left:0;top:0"><polyline points="1.4,4.3 3.1,7.3 7.7,2.3" fill="none" stroke="#000" stroke-width="2.1"/></svg></div>
<div class="t" style="left:353px;top:475px;color:#000;">同时抢候补功能</div>
<div style="left:336px;top:504px;width:11px;height:11px;border:1px solid #000;background:#fff"></div>
<div class="t" style="left:353px;top:502px;color:#000;">只抢候补不抢票</div>
<div style="left:336px;top:531px;width:11px;height:11px;border:1px solid #000;background:#fff"></div>
<div class="t" style="left:353px;top:529px;color:#000;">无座席位也候补</div>
<div style="left:336px;top:558px;width:11px;height:11px;border:1px solid #000;background:#fff"></div>
<div class="t" style="left:353px;top:556px;color:#000;">高铁和动车选座</div>
<div style="left:336px;top:585px;width:11px;height:11px;border:1px solid #000;background:#fff"></div>
<div class="t" style="left:353px;top:583px;color:#000;">抢到票自动支付</div>
<div style="left:336px;top:612px;width:11px;height:11px;border:1px solid #000;background:#fff"><svg width="9" height="9" style="position:absolute;left:0;top:0"><polyline points="1.4,4.3 3.1,7.3 7.7,2.3" fill="none" stroke="#000" stroke-width="2.1"/></svg></div>
<div class="t" style="left:353px;top:610px;color:#000;">自动抢增开列车</div>
<div style="left:335px;top:630px;width:105px;height:25px;border:1px solid #7a7a7a;background:#fff;"></div>
<div class="t" style="left:338px;top:634px;color:#000;"><span class="l">00</span>:<span class="l">00-24</span>:<span class="l">00</span></div>
<svg style="position:absolute;left:427px;top:640px" width="9" height="6"><path d="M0.6 0.8 L4 4.6 L7.4 0.8" fill="none" stroke="#444" stroke-width="1.15"/></svg>
<div style="left:452px;top:435px;width:425px;height:233px;border:1px solid #dcdcdc;background:transparent;"></div>
<div style="left:458px;top:427px;width:42px;height:16px;background:#fff"></div>
<div class="t" style="left:461px;top:428px;color:#000;">输出区</div>
<div style="left:459px;top:443px;width:410px;height:221px;border:1px solid #6e6e6e;background:#fff;"></div>
<div style="left:851px;top:445px;width:16px;height:217px;background:#f0f0f0"></div>
<svg style="position:absolute;left:855px;top:450px" width="8" height="8"><path d="M0.8 6.2 L3.75 2.4 L6.7 6.2" fill="none" stroke="#a8a8a8" stroke-width="1.8"/></svg>
<svg style="position:absolute;left:855px;top:650px" width="8" height="8"><path d="M0.8 1.8 L3.75 5.6 L6.7 1.8" fill="none" stroke="#a8a8a8" stroke-width="1.8"/></svg>
<div class="t" style="left:465px;top:447px;color:#3a7fc0;"><span class="l">10</span>:<span class="l">58</span>:<span class="l">48</span>:<span class="l">4</span></div>
<div class="t" style="left:530px;top:447px;color:#3a7fc0;">查询完毕<span class="fc">,</span>本次查询共用时:<span class="l">435</span>毫秒。</div>
<div class="t" style="left:465px;top:464px;color:#3a7fc0;"><span class="l">10</span>:<span class="l">58</span>:<span class="l">19</span>:<span class="l">7</span></div>
<div class="t" style="left:530px;top:464px;color:#3a7fc0;">获取到:<span class="l">1062</span>个<span class="l">CDN</span>,开始智能测速中<span class="l">...</span></div>
<div class="t" style="left:465px;top:481px;color:#3a7fc0;"><span class="l">10</span>:<span class="l">58</span>:<span class="l">19</span>:<span class="l">7</span></div>
<div class="t" style="left:530px;top:481px;color:#3a7fc0;">您还没有绑定微信通知<span class="fc">,</span>建议绑定微信通知<span class="fc">,</span>接受消息。</div>
<div class="t" style="left:465px;top:498px;color:#3a7fc0;"><span class="l">10</span>:<span class="l">58</span>:<span class="l">19</span>:<span class="l">3</span></div>
<div class="t" style="left:530px;top:498px;color:#3a7fc0;">链接<span class="l">12306</span>服务器速度:<span class="l">117</span>毫秒[优]</div>
<div class="t" style="left:465px;top:515px;color:#3a7fc0;"><span class="l">10</span>:<span class="l">58</span>:<span class="l">18</span>:<span class="l">7</span></div>
<div class="t" style="left:530px;top:515px;color:#3a7fc0;">正在初始化<span class="l">...</span>已完成</div>
<div class="t" style="left:465px;top:532px;color:#3a7fc0;"><span class="l">10</span>:<span class="l">57</span>:<span class="l">30</span>:<span class="l">0</span></div>
<div class="t" style="left:530px;top:532px;color:#3a7fc0;">[设置完毕]已同步时间</div>
<div class="t" style="left:465px;top:549px;color:#3a7fc0;"><span class="l">10</span>:<span class="l">57</span>:<span class="l">30</span>:<span class="l">0</span></div>
<div class="t" style="left:530px;top:549px;color:#3a7fc0;">[本地时间]<span class="fc">:</span><span class="l">2022-01-17</span> <span class="l">10</span>:<span class="l">57</span>:<span class="l">30</span></div>
<div class="t" style="left:465px;top:566px;color:#3a7fc0;"><span class="l">10</span>:<span class="l">57</span>:<span class="l">30</span>:<span class="l">0</span></div>
<div class="t" style="left:530px;top:566px;color:#3a7fc0;">[服务器<span class="l">-1</span>]<span class="fc">:</span><span class="l">2022-01-17</span> <span class="l">10</span>:<span class="l">57</span>:<span class="l">29</span></div>
<div class="t" style="left:465px;top:583px;color:#3a7fc0;"><span class="l">10</span>:<span class="l">57</span>:<span class="l">30</span>:<span class="l">0</span></div>
<div class="t" style="left:530px;top:583px;color:#3a7fc0;">正在从[<span class="l">1</span>]号服务器获取时间<span class="l">...</span></div>
<div style="left:883px;top:435px;width:165px;height:176px;border:1px solid #dcdcdc;background:transparent;"></div>
<div style="left:889px;top:427px;width:42px;height:16px;background:#fff"></div>
<div class="t" style="left:892px;top:428px;color:#000;">设置区</div>
<div style="left:889px;top:454px;width:11px;height:11px;border:1px solid #000;background:#fff"></div>
<div class="t" style="left:906px;top:451px;color:#000;">定时抢票</div>
<div style="left:967px;top:448px;width:72px;height:23px;border:1px solid #7a7a7a;background:#fff;"></div>
<div class="t" style="left:970px;top:451px;color:#000;"><span class="l">05</span>:<span class="l">00</span>:<span class="l">00</span></div>
<div style="left:1021px;top:450px;width:15px;height:9px;background:#e8e8e8;border:1px solid #bcbcbc"></div>
<div style="left:1021px;top:459px;width:15px;height:9px;background:#e8e8e8;border:1px solid #bcbcbc"></div>
<svg style="position:absolute;left:1024px;top:452px" width="9" height="16"><path d="M1 5 L4.5 1.5 L8 5 Z M1 10.5 L4.5 14 L8 10.5 Z" fill="#333"/></svg>
<div style="left:889px;top:482px;width:11px;height:11px;border:1px solid #000;background:#fff"></div>
<div class="t" style="left:906px;top:479px;color:#000;">修改间隔</div>
<div style="left:967px;top:477px;width:72px;height:23px;border:1px solid #c8c8c8;background:#f0f0f0;"></div>
<div class="t" style="left:970px;top:480px;color:#a0a0a0;"><span class="l">1000</span></div>
<div style="left:1021px;top:479px;width:15px;height:9px;background:#f0f0f0;border:1px solid #e0e0e0"></div>
<div style="left:1021px;top:488px;width:15px;height:9px;background:#f0f0f0;border:1px solid #e0e0e0"></div>
<svg style="position:absolute;left:1024px;top:481px" width="9" height="16"><path d="M1 5 L4.5 1.5 L8 5 Z M1 10.5 L4.5 14 L8 10.5 Z" fill="#aaa"/></svg>
<div style="left:889px;top:510px;width:11px;height:11px;border:1px solid #000;background:#fff"><svg width="9" height="9" style="position:absolute;left:0;top:0"><polyline points="1.4,4.3 3.1,7.3 7.7,2.3" fill="none" stroke="#000" stroke-width="2.1"/></svg></div>
<div class="t" style="left:906px;top:507px;color:#000;">小黑屋</div>
<div style="left:967px;top:503px;width:72px;height:23px;border:1px solid #7a7a7a;background:#fff;"></div>
<div class="t" style="left:970px;top:506px;color:#000;"><span class="l">120</span></div>
<div style="left:1021px;top:505px;width:15px;height:9px;background:#e8e8e8;border:1px solid #bcbcbc"></div>
<div style="left:1021px;top:514px;width:15px;height:9px;background:#e8e8e8;border:1px solid #bcbcbc"></div>
<svg style="position:absolute;left:1024px;top:507px" width="9" height="16"><path d="M1 5 L4.5 1.5 L8 5 Z M1 10.5 L4.5 14 L8 10.5 Z" fill="#333"/></svg>
<div style="left:889px;top:537px;width:11px;height:11px;border:1px solid #000;background:#fff"><svg width="9" height="9" style="position:absolute;left:0;top:0"><polyline points="1.4,4.3 3.1,7.3 7.7,2.3" fill="none" stroke="#000" stroke-width="2.1"/></svg></div>
<div class="t" style="left:906px;top:534px;color:#000;">全国<span class="l">CDN</span></div>
<div class="t" style="left:969px;top:534px;color:#5c5c5c;font-weight:bold">可用<span class="fc">:</span><span class="l">194</span></div>
<div style="left:889px;top:564px;width:11px;height:11px;border:1px solid #000;background:#fff"></div>
<div class="t" style="left:906px;top:561px;color:#000;">实时余票无座时,不提交</div>
<div style="left:889px;top:591px;width:11px;height:11px;border:1px solid #000;background:#fff"></div>
<div class="t" style="left:906px;top:588px;color:#000;">余票不足乘客时,部分提交</div>
<div style="left:884px;top:619px;width:163px;height:45px;border:1px solid #adadad;background:#e1e1e1;"></div>
<div class="t" style="left:940px;top:634px;color:#2e8ae6;font-weight:bold;font-size:13px">开始抢票</div>
<div style="left:1px;top:686px;width:1068px;height:1px;background:#dadada"></div>
<div style="left:1px;top:687px;width:1068px;height:20px;background:#f0f0f0"></div>
<svg style="position:absolute;left:4px;top:691px" width="12" height="12"><circle cx="6" cy="6" r="5.3" fill="none" stroke="#333" stroke-width="1"/><path d="M6 5 V9.5" stroke="#333" stroke-width="1.3"/><rect x="5.35" y="2.6" width="1.3" height="1.3" fill="#333"/></svg>
<div class="t" style="left:21px;top:690px;color:#27566b;">当前账号:</div>
<div class="t" style="left:128px;top:690px;color:#27566b;">免费用户】</div>
<div style="left:194px;top:689px;width:1px;height:17px;background:#c4c4c4"></div>
<svg style="position:absolute;left:199px;top:691px" width="12" height="12"><rect x="0.75" y="0.75" width="10.5" height="10.5" rx="1.6" fill="none" stroke="#555" stroke-width="1.5"/><path d="M8.8 2.9 L5.8 5.9" fill="none" stroke="#000" stroke-width="1.3"/><path d="M4.5 4.1 L4.5 7.3 L7.7 7.3 Z" fill="#000"/><rect x="1.5" y="8" width="2" height="2" fill="#999"/></svg>
<div class="t" style="left:216px;top:690px;color:#27566b;">推送</div>
<div style="left:245px;top:689px;width:1px;height:17px;background:#c4c4c4"></div>
<svg style="position:absolute;left:251px;top:690px" width="13" height="14"><path d="M8.8 1.2 L12 4.4 L5 11.4 L1.3 12.6 L2.2 8.6 Z M7.2 2.8 L10.4 6" fill="none" stroke="#333" stroke-width="1.3"/></svg>
<div class="t" style="left:268px;top:690px;color:#27566b;">进度:</div>
<div style="left:301px;top:689px;width:101px;height:16px;border:1px solid #c8c8c8;background:#e6e6e6;"></div>
<div class="t" style="left:541px;top:691px;color:#752049;">最新动态<span class="fc">:</span></div>
<div class="t" style="left:606px;top:691px;color:#752049;">邹</div>
<div class="t" style="left:620px;top:691px;color:#752049;">*</div>
<div class="t" style="left:626px;top:691px;color:#752049;">*</div>
<div class="t" style="left:633px;top:691px;color:#752049;">在</div>
<div class="t" style="left:646px;top:691px;color:#752049;"><span class="l">10</span>:<span class="l">58</span>:<span class="l">14</span></div>
<div class="t" style="left:693px;top:691px;color:#752049;">抢到了</div>
<div class="t" style="left:730px;top:691px;color:#752049;"><span class="l">2022-01-29</span>,</div>
<div class="t" style="left:798px;top:691px;color:#752049;">杭州东<span class="l">-</span>温州南,</div>
<div class="t" style="left:879px;top:691px;color:#752049;"><span class="l">G7431</span></div>
<div class="t" style="left:917px;top:691px;color:#752049;">车次,</div>
<div class="t" style="left:945px;top:691px;color:#752049;">¥<span class="l">138.0</span></div>
<div class="t" style="left:981px;top:691px;color:#752049;">元的</div>
<div style="left:1005px;top:690px;width:7px;height:16px;overflow:hidden"><div class="t" style="left:0;top:1px;color:#752049">二</div></div>
<div style="left:1011px;top:687px;width:3px;height:20px;background:#f0f0f0"></div>
<svg style="position:absolute;left:1013px;top:691px" width="15" height="13"><path d="M1 4.6 Q7.5 -1.2 14 4.6 M3.2 7 Q7.5 3 11.8 7 M5.4 9.3 Q7.5 7.4 9.6 9.3" fill="none" stroke="#333" stroke-width="1.3"/><circle cx="7.5" cy="11.3" r="1.2" fill="#333"/></svg>
<div class="t" style="left:1031px;top:690px;color:#27566b;">[优]</div>
<div style="left:1065px;top:695px;width:2px;height:2px;background:#a8a8a8"></div>
<div style="left:1061px;top:699px;width:2px;height:2px;background:#a8a8a8"></div>
<div style="left:1065px;top:699px;width:2px;height:2px;background:#a8a8a8"></div>
<div style="left:1057px;top:703px;width:2px;height:2px;background:#a8a8a8"></div>
<div style="left:1061px;top:703px;width:2px;height:2px;background:#a8a8a8"></div>
<div style="left:1065px;top:703px;width:2px;height:2px;background:#a8a8a8"></div></body></html>
